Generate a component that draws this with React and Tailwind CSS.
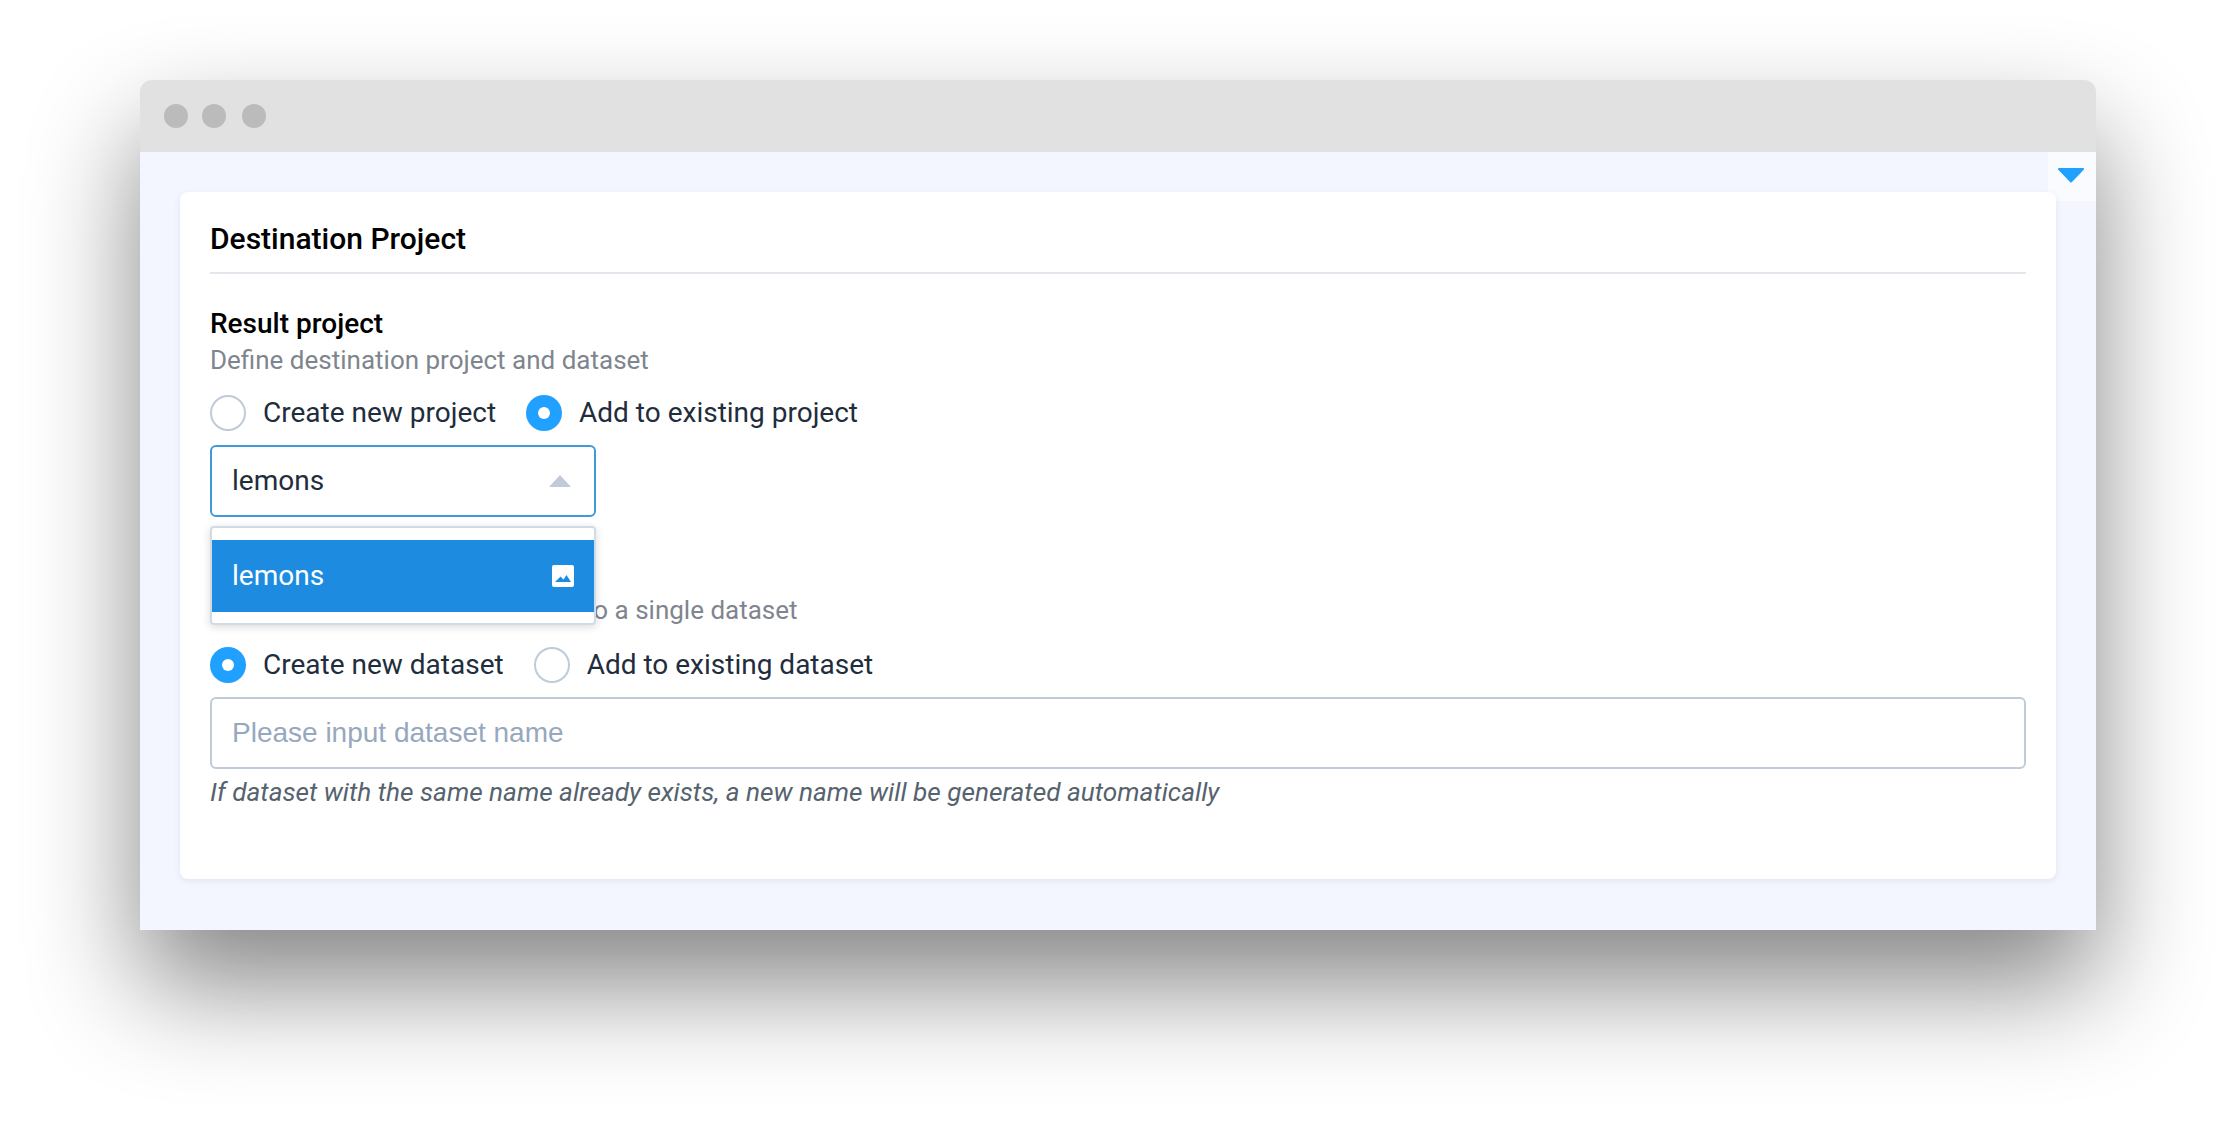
import React from "react";

const Radio = ({ checked, label }) => (
  <label className="flex items-center gap-[17px]">
    {checked ? (
      <span className="flex h-[36px] w-[36px] items-center justify-center rounded-full bg-[#20a0ff]">
        <span className="h-[12px] w-[12px] rounded-full bg-white"></span>
      </span>
    ) : (
      <span className="h-[36px] w-[36px] rounded-full border-2 border-[#bfcbd9] bg-white"></span>
    )}
    <span className="text-[28px] leading-[36px] text-[#1f2d3d]">{label}</span>
  </label>
);

const App = () => {
  return (
    <div className="h-[1130px] w-[2236px] overflow-hidden bg-white pl-[140px] pt-[80px] font-['Roboto',sans-serif]">
      <div className="relative h-[850px] w-[1956px] rounded-t-[12px] bg-[#f3f6fe] shadow-[0_55px_110px_rgba(0,0,0,0.48)]">
        {/* Title bar */}
        <div className="flex h-[72px] items-center rounded-t-[12px] bg-[#e1e1e1] pl-[24px]">
          <span className="h-[24px] w-[24px] rounded-full bg-[#bbbbbb]"></span>
          <span className="ml-[14px] h-[24px] w-[24px] rounded-full bg-[#bbbbbb]"></span>
          <span className="ml-[16px] h-[24px] w-[24px] rounded-full bg-[#bbbbbb]"></span>
        </div>

        {/* Collapse toggle */}
        <div className="absolute right-0 top-[72px] flex h-[49px] w-[48px] items-start justify-center rounded-bl-[8px] bg-[#f9fbff] pr-[2px] pt-[16px]">
          <svg width="28" height="15" viewBox="0 0 28 15">
            <path d="M2 1 H26 L14 13.5 Z" fill="#20a0ff" stroke="#20a0ff" strokeWidth="2" strokeLinejoin="round" />
          </svg>
        </div>

        <div className="px-[40px] pt-[40px]">
          <div className="relative h-[687px] rounded-[8px] bg-white px-[30px] shadow-[0_2px_6px_rgba(70,90,130,0.1)]">
            <div className="border-b-2 border-[#e3e6ec] pb-[16px] pt-[29px]">
              <h2 className="text-[30px] font-medium leading-[35px] text-black">Destination Project</h2>
            </div>

            {/* Result project */}
            <div className="relative pt-[32px]">
              <h3 className="text-[28px] font-medium leading-[36px] text-black">Result project</h3>
              <p className="text-[26px] leading-[36px] text-[#7f858e]">Define destination project and dataset</p>
              <div className="mt-[17px] flex gap-[30px]">
                <Radio label="Create new project" />
                <Radio checked label="Add to existing project" />
              </div>
              <div className="mt-[14px] flex h-[72px] w-[386px] items-center justify-between rounded-[6px] border-2 border-[#3f9ad8] bg-white pl-[20px] pr-[22px]">
                <span className="text-[28px] text-[#1f2d3d]">lemons</span>
                <svg width="24" height="14" viewBox="0 0 24 14">
                  <path d="M12 1 L23 13 H1 Z" fill="#bfcbd9" />
                </svg>
              </div>

              {/* Dropdown, open over the dataset section */}
              <div className="absolute left-0 top-[252px] z-10 w-[386px] rounded-[4px] border-2 border-[#d1dbe5] bg-white pb-[11px] pt-[12px] shadow-[0_2px_8px_rgba(0,0,0,0.15)]">
                <div className="flex h-[72px] items-center justify-between bg-[#1d8ce0] pl-[20px] pr-[20px]">
                  <span className="text-[28px] text-white">lemons</span>
                  <svg width="22" height="22" viewBox="0 0 22 22">
                    <path fillRule="evenodd" d="M2 0 H20 A2 2 0 0 1 22 2 V20 A2 2 0 0 1 20 22 H2 A2 2 0 0 1 0 20 V2 A2 2 0 0 1 2 0 Z M3 17 H19 L14.5 10 L11.5 14.5 L8.5 11.5 Z" fill="#ffffff" />
                  </svg>
                </div>
              </div>

              {/* Result dataset */}
              <div className="mt-[39px]">
                <h3 className="text-[28px] font-medium leading-[36px] text-black">Result dataset</h3>
                <p className="text-[26px] leading-[36px] text-[#7f858e]">All selected items will be placed to a single dataset</p>
              </div>
              <div className="mt-[19px] flex gap-[30px]">
                <Radio checked label="Create new dataset" />
                <Radio label="Add to existing dataset" />
              </div>
              <div className="mt-[14px] flex h-[72px] items-center rounded-[6px] border-2 border-[#bfcbd9] bg-white pl-[20px]">
                <span className="font-['Liberation_Sans',sans-serif] text-[28px] text-[#97a8be]">Please input dataset name</span>
              </div>
              <p className="mt-[5px] text-[26.2px] italic leading-[36px] text-[#56626e]">
                If dataset with the same name already exists, a new name will be generated automatically
              </p>
            </div>
          </div>
        </div>
      </div>
    </div>
  );
};

export default App;
